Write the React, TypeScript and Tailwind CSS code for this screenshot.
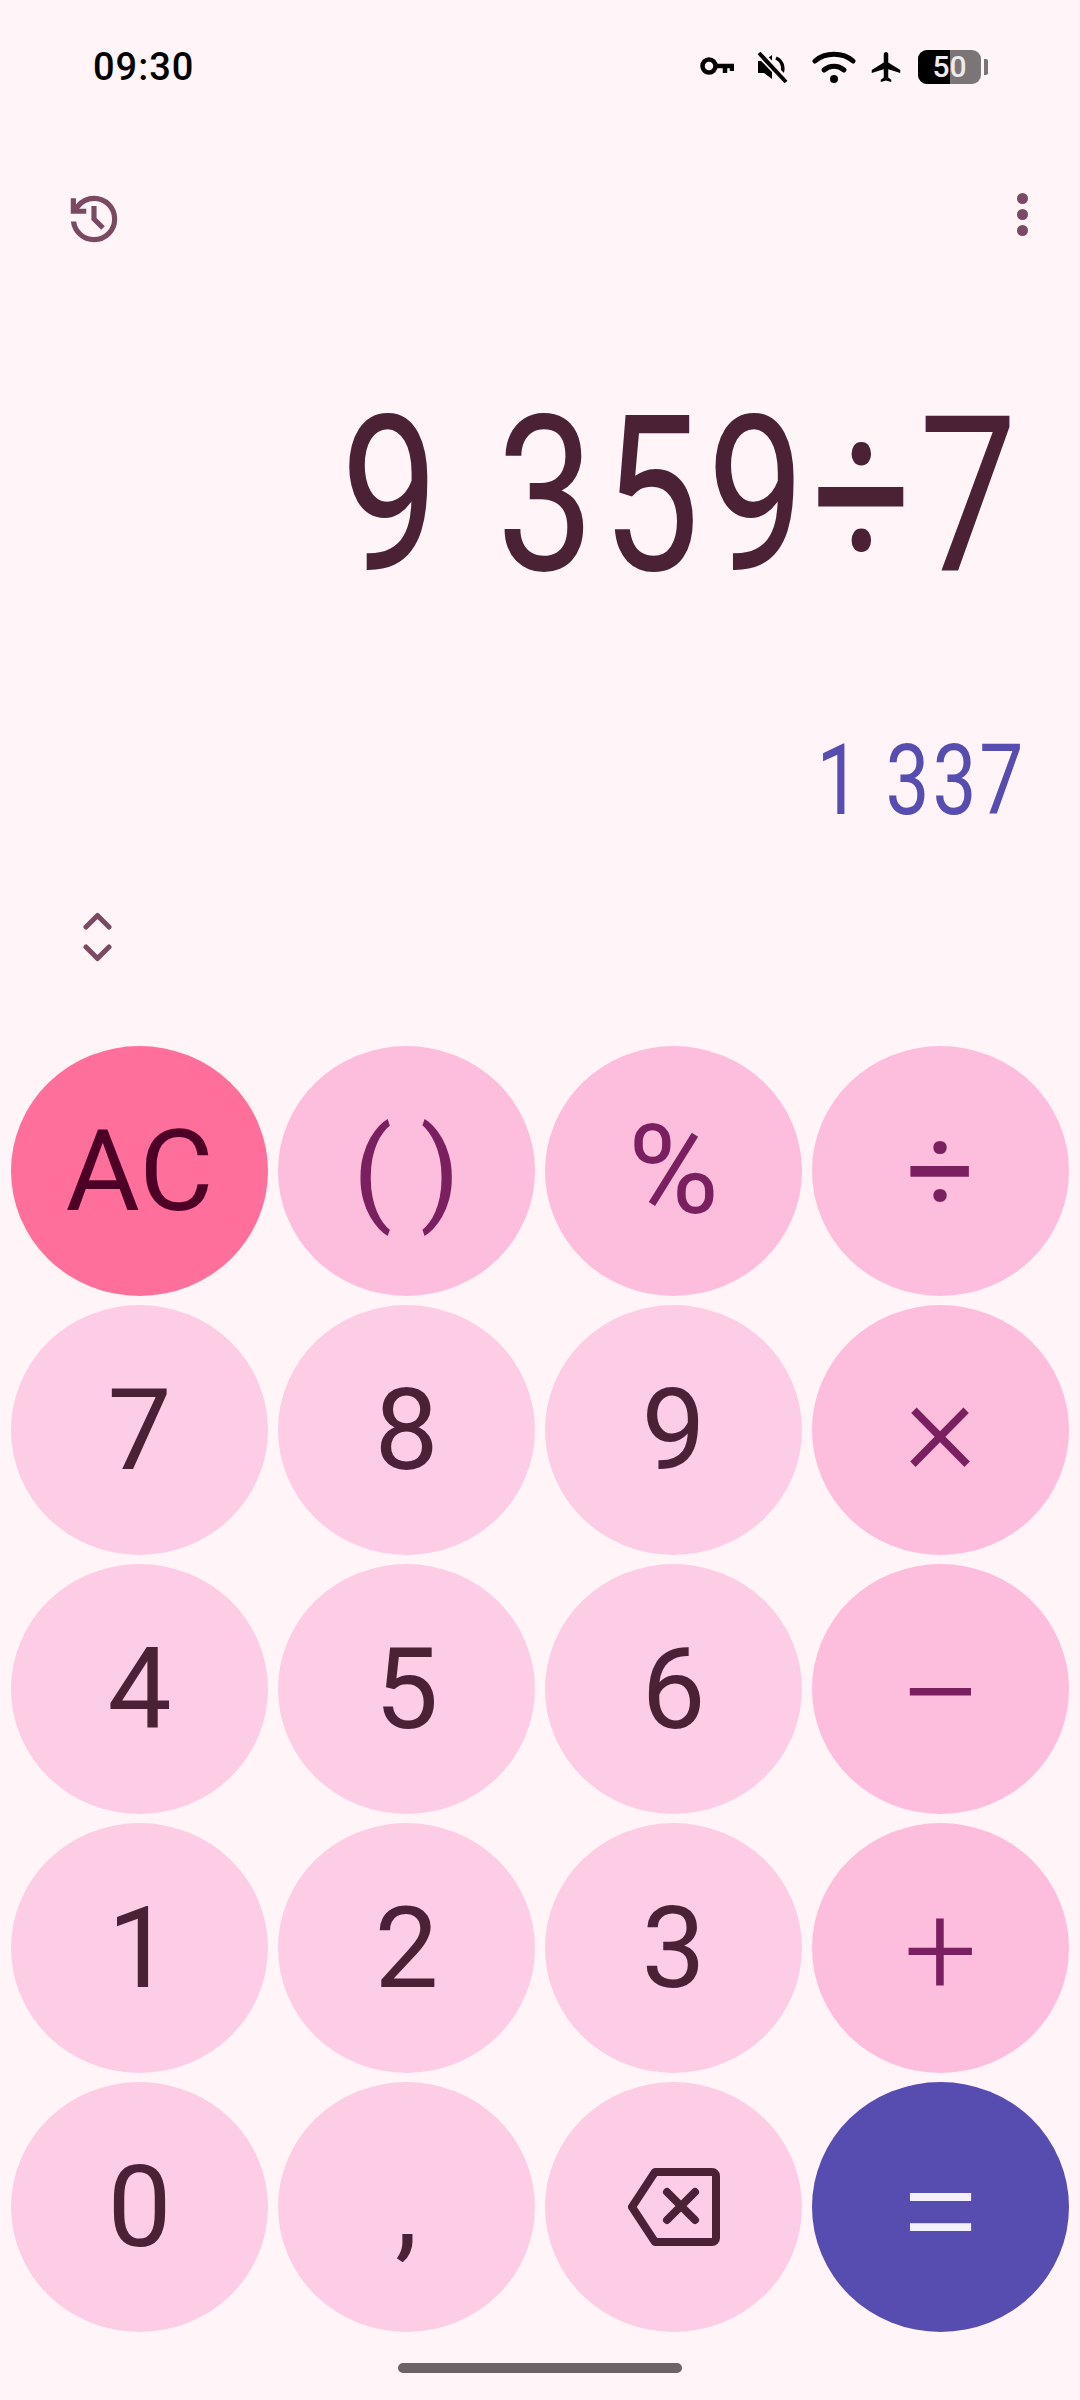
import React from 'react';

type Key = { label: React.ReactNode; kind: 'clear' | 'op' | 'digit' | 'equals'; size?: string };

const ROBOTO = 'font-["Roboto",sans-serif]';

function BackspaceIcon() {
    return (
        <svg width="92" height="78" viewBox="0 0 92 78" fill="none" stroke="#4a2135" strokeWidth="8" strokeLinejoin="round" strokeLinecap="round">
            <path d="M27 4H84a4 4 0 0 1 4 4V70a4 4 0 0 1-4 4H27L4 39Z" />
            <path d="M39 24L67 52M67 24L39 52" />
        </svg>
    );
}

const keys: Key[] = [
    { label: 'AC', kind: 'clear' },
    { label: '( )', kind: 'op' },
    { label: '%', kind: 'op', size: 'text-[124px]' },
    { label: '÷', kind: 'op', size: 'text-[120px]' },
    { label: '7', kind: 'digit' },
    { label: '8', kind: 'digit' },
    { label: '9', kind: 'digit' },
    { label: '×', kind: 'op', size: 'text-[140px] pb-[8px] font-light' },
    { label: '4', kind: 'digit' },
    { label: '5', kind: 'digit' },
    { label: '6', kind: 'digit' },
    { label: '−', kind: 'op', size: 'text-[150px] pt-[12px] font-light' },
    { label: '1', kind: 'digit' },
    { label: '2', kind: 'digit' },
    { label: '3', kind: 'digit' },
    { label: '+', kind: 'op', size: 'text-[130px] pt-[6px] font-light' },
    { label: '0', kind: 'digit' },
    { label: ',', kind: 'digit' },
    { label: <BackspaceIcon />, kind: 'digit' },
    { label: '=', kind: 'equals', size: 'text-[150px] pt-[8px] font-light' },
];

const keyStyles = {
    clear: 'bg-[#ff6f9b] text-[#4d0025]',
    op: 'bg-[#fdbedd] text-[#7a1f5f]',
    digit: 'bg-[#fdcde6] text-[#4a2135]',
    equals: 'bg-[#574cb0] text-[#f5f0ff]',
};

function StatusIcons() {
    return (
        <div className="flex items-center">
            {/* vpn key */}
            <svg width="34" height="20" viewBox="0 0 34 20" className="mr-[22px]" fill="none" stroke="#000" strokeWidth="4.5">
                <circle cx="9" cy="9" r="6.5" />
                <path d="M15.5 9H32V14M25 9V16" />
            </svg>
            {/* muted */}
            <svg width="32" height="34" viewBox="0 0 32 34" className="mr-[24px]">
                <path d="M2 11H8L16 5V29L8 23H2Z" fill="#000" />
                <path d="M20 8C27 11 29 20 24 26" stroke="#000" strokeWidth="3.5" fill="none" />
                <path d="M3 3L31 32" stroke="#fff4f7" strokeWidth="8" />
                <path d="M3 3L30 32" stroke="#000" strokeWidth="4" />
            </svg>
            {/* wifi */}
            <svg width="44" height="34" viewBox="0 0 44 34" className="mr-[12px]" fill="none" stroke="#000" strokeWidth="5" strokeLinecap="round">
                <path d="M3 11C13 2 31 2 41 11" />
                <path d="M12 20C18 15 26 15 32 20" />
                <circle cx="22" cy="29" r="4" fill="#000" stroke="none" />
            </svg>
            {/* airplane */}
            <svg width="36" height="36" viewBox="0 0 24 24" className="mr-[14px]" fill="#000">
                <path d="M21 16v-2l-8-5V3.5c0-.83-.67-1.5-1.5-1.5S10 2.67 10 3.5V9l-8 5v2l8-2.5V19l-2 1.5V22l3.5-1 3.5 1v-1.5L13 19v-5.5l8 2.5z" transform="translate(.5 0)" />
            </svg>
            {/* battery */}
            <div className="flex items-center">
                <div className="relative flex h-[34px] w-[63px] items-center justify-center overflow-hidden rounded-[9px] bg-[#7b7577]">
                    <div className="absolute inset-y-0 left-0 w-[32px] bg-black" />
                    <span className={`relative text-[30px] leading-none font-medium text-[#efeaec] ${ROBOTO}`}>50</span>
                </div>
                <div className="ml-[3px] h-[16px] w-[4px] rounded-r-[2px] bg-[#7b7577]" />
            </div>
        </div>
    );
}

export default function App() {
    return (
        <div className="flex h-[2400px] w-[1080px] flex-col overflow-hidden bg-[#fff4f7]">
            {/* status bar */}
            <div className="flex h-[130px] items-start justify-between pt-[49px] pr-[92px] pl-[93px]">
                <span className={`text-[38px] leading-[36px] font-medium tracking-[1px] text-black ${ROBOTO}`}>09:30</span>
                <StatusIcons />
            </div>

            {/* toolbar */}
            <div className="flex h-[130px] items-start justify-between pt-[58px] pr-[52px] pl-[63px]">
                <svg width="62" height="62" viewBox="0 -960 960 960" fill="#7a4a63">
                    <path d="M480-120q-138 0-240.5-91.5T122-440h82q14 104 92.5 172T480-200q117 0 198.5-81.5T760-480q0-117-81.5-198.5T480-760q-69 0-129 32t-101 88h110v80H120v-240h80v94q51-64 124.5-99T480-840q150 0 255 105t105 255q0 150-105 255T480-120Zm112-192L440-464v-216h80v184l128 128-56 56Z" />
                </svg>
                <div className="flex flex-col gap-[5px] pt-[5px]">
                    <div className="h-[11px] w-[11px] rounded-full bg-[#7a4a63]" />
                    <div className="h-[11px] w-[11px] rounded-full bg-[#7a4a63]" />
                    <div className="h-[11px] w-[11px] rounded-full bg-[#7a4a63]" />
                </div>
            </div>

            {/* formula */}
            <div className="flex h-[472px] items-start justify-end pt-[127px] pr-[56px]">
                <span className={`inline-block origin-right scale-x-[0.8] text-[218px] leading-[218px] tracking-[9px] whitespace-nowrap text-[#4a2135] ${ROBOTO}`}>9 359÷7</span>
            </div>

            {/* result */}
            <div className="flex h-[130px] items-start justify-end pr-[54px]">
                <span className={`inline-block origin-right scale-x-[0.8] text-[98px] leading-[98px] tracking-[3.5px] whitespace-nowrap text-[#574cb0] ${ROBOTO}`}>1 337</span>
            </div>

            {/* expand chevrons */}
            <div className="flex h-[184px] items-start pt-[50px] pl-[83px]">
                <svg width="29" height="50" viewBox="0 0 29 50" fill="none" stroke="#7a4a63" strokeWidth="5" strokeLinecap="round" strokeLinejoin="round">
                    <path d="M3 15L14.5 3.5L26 15" />
                    <path d="M3 35L14.5 46.5L26 35" />
                </svg>
            </div>

            {/* keypad */}
            <div className="grid grid-cols-4 gap-x-[10px] gap-y-[9px] px-[11px]">
                {keys.map((key, i) => (
                    <div
                        key={i}
                        className={`flex h-[250px] w-[257px] items-center justify-center rounded-[50%] leading-none ${key.size ?? 'text-[114px]'} ${keyStyles[key.kind]} ${ROBOTO}`}
                    >
                        {key.label}
                    </div>
                ))}
            </div>

            {/* gesture pill */}
            <div className="flex justify-center pt-[31px]">
                <div className="h-[10px] w-[284px] rounded-full bg-[#6b6365]" />
            </div>
        </div>
    );
}
